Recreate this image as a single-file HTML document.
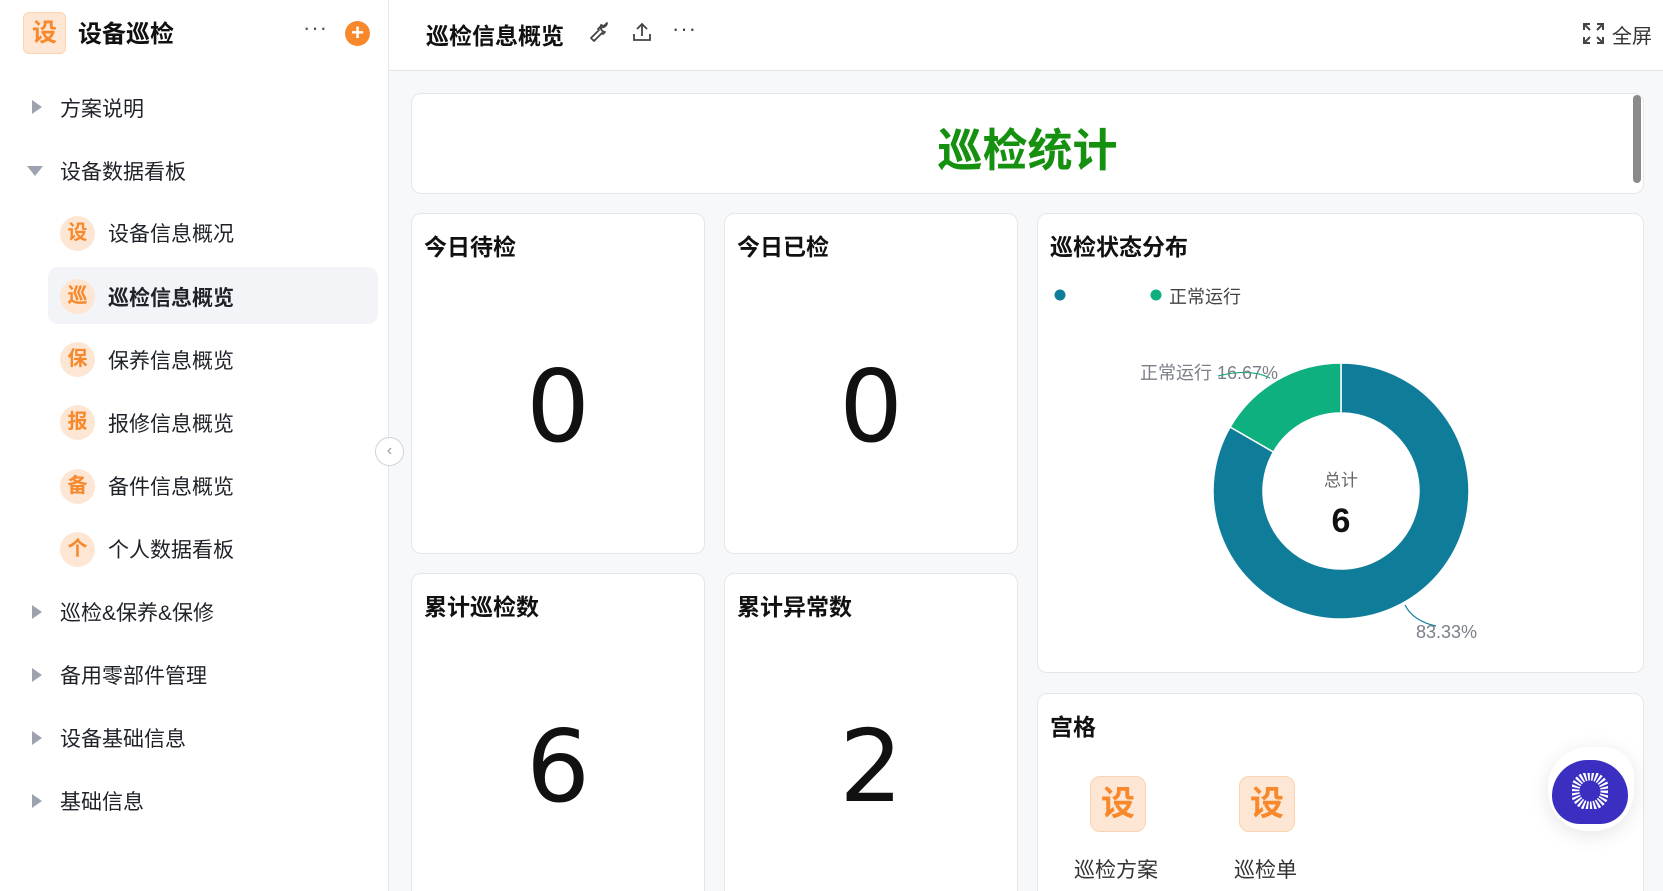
<!DOCTYPE html>
<html><head><meta charset="utf-8"><style>
*{margin:0;padding:0;box-sizing:border-box}
html{width:1663px;height:891px;overflow:hidden}
body{width:1663px;height:891px;overflow:hidden;background:#f7f8fa;font-family:"Liberation Sans","Noto Sans CJK SC",sans-serif;color:#1f2329;position:relative}
.abs{position:absolute}
.side{left:0;top:0;width:389px;height:891px;background:#fff;border-right:1px solid #e5e6eb}
.hdr{left:389px;top:0;width:1274px;height:71px;background:#fff;border-bottom:1px solid #e5e6eb}
.card{background:#fff;border:1px solid #e5e6eb;border-radius:10px;position:absolute}
.item{position:absolute;left:0;width:389px;font-size:21px;color:#1f2329;line-height:30px}
.tri{position:absolute;left:32px;width:0;height:0}
.ic{position:absolute;left:60px;width:35px;height:35px;border-radius:50%;background:#fde6d3;color:#f7892c;font-weight:bold;font-size:20px;text-align:center;line-height:35px}
.ct{position:absolute;left:12px;top:14px;font-size:23px;font-weight:bold;color:#111}
.num{position:absolute;left:0;width:100%;text-align:center;font-family:"DejaVu Sans",sans-serif;font-size:100px;color:#111;line-height:1}
</style></head><body>
<div class="abs side">
  <div class="abs" style="left:23px;top:12px;width:43px;height:42px;background:#fde6d3;border:1px solid #fbd3b0;border-radius:6px;color:#f7892c;font-weight:bold;font-size:25px;text-align:center;line-height:40px">设</div>
  <div class="abs" style="left:78px;top:14px;font-size:24px;font-weight:bold;color:#111">设备巡检</div>
  <div class="abs" style="left:303px;top:15px;font-size:22px;color:#555;letter-spacing:1px">···</div>
  <div class="abs" style="left:345px;top:21px;width:25px;height:25px;border-radius:50%;background:#f7892c;color:#fff;font-size:22px;line-height:24px;text-align:center;font-weight:bold">+</div>

  <div class="tri" style="top:100px;border-left:10px solid #9ca3af;border-top:7px solid transparent;border-bottom:7px solid transparent"></div>
  <div class="item" style="top:95px;left:60px">方案说明</div>
  <div class="tri" style="left:27px;top:166px;border-top:10px solid #9ca3af;border-left:8px solid transparent;border-right:8px solid transparent"></div>
  <div class="item" style="top:158px;left:60px">设备数据看板</div>

  <div class="abs" style="left:48px;top:267px;width:330px;height:57px;background:#f3f4f7;border-radius:10px"></div>
  <div class="ic" style="top:216px">设</div><div class="item" style="top:220px;left:108px">设备信息概况</div>
  <div class="ic" style="top:279px">巡</div><div class="item" style="top:284px;left:108px;font-weight:bold">巡检信息概览</div>
  <div class="ic" style="top:342px">保</div><div class="item" style="top:347px;left:108px">保养信息概览</div>
  <div class="ic" style="top:405px">报</div><div class="item" style="top:410px;left:108px">报修信息概览</div>
  <div class="ic" style="top:469px">备</div><div class="item" style="top:473px;left:108px">备件信息概览</div>
  <div class="ic" style="top:532px">个</div><div class="item" style="top:536px;left:108px">个人数据看板</div>

  <div class="tri" style="top:605px;border-left:10px solid #9ca3af;border-top:7px solid transparent;border-bottom:7px solid transparent"></div>
  <div class="item" style="top:599px;left:60px">巡检&amp;保养&amp;保修</div>
  <div class="tri" style="top:668px;border-left:10px solid #9ca3af;border-top:7px solid transparent;border-bottom:7px solid transparent"></div>
  <div class="item" style="top:662px;left:60px">备用零部件管理</div>
  <div class="tri" style="top:731px;border-left:10px solid #9ca3af;border-top:7px solid transparent;border-bottom:7px solid transparent"></div>
  <div class="item" style="top:725px;left:60px">设备基础信息</div>
  <div class="tri" style="top:794px;border-left:10px solid #9ca3af;border-top:7px solid transparent;border-bottom:7px solid transparent"></div>
  <div class="item" style="top:788px;left:60px">基础信息</div>
</div>
<div class="abs" style="left:375px;top:437px;width:29px;height:29px;border-radius:50%;background:#fff;border:1px solid #d0d3d9;color:#999;text-align:center;line-height:26px;font-size:16px">‹</div>

<div class="abs hdr">
  <div class="abs" style="left:37px;top:17px;font-size:23px;font-weight:bold;color:#111">巡检信息概览</div>
  <svg class="abs" style="left:198px;top:21px" width="24" height="24" viewBox="0 0 24 24" fill="none" stroke="#444" stroke-width="1.8"><path d="M14 4a5 5 0 0 0 4 7l-2 2-1-1-8 8-3-3 8-8-1-1 2-2a5 5 0 0 0 7-4l-3 3-3-1z" stroke-linejoin="round"/></svg>
  <svg class="abs" style="left:241px;top:20px" width="24" height="24" viewBox="0 0 24 24" fill="none" stroke="#444" stroke-width="1.8"><path d="M12 16V4M7 9l5-5 5 5M4 14v6h16v-6"/></svg>
  <div class="abs" style="left:283px;top:18px;font-size:22px;color:#444;letter-spacing:1px;line-height:22px">···</div>
  <svg class="abs" style="left:1194px;top:23px" width="21" height="21" viewBox="0 0 21 21" fill="none" stroke="#444" stroke-width="2"><path d="M1 7V1h6M1 1l6 6M14 1h6v6M20 1l-6 6M1 14v6h6M1 20l6-6M20 14v6h-6M20 20l-6-6"/></svg>
  <div class="abs" style="left:1223px;top:20px;font-size:20px;color:#333">全屏</div>
</div>

<div class="card" style="left:411px;top:93px;width:1233px;height:101px">
  <div class="abs" style="left:0;width:100%;top:20px;text-align:center;font-size:45px;font-weight:bold;color:#16900f">巡检统计</div>
</div>
<div class="abs" style="left:1633px;top:95px;width:8px;height:88px;border-radius:4px;background:#8a8a8a"></div>

<div class="card" style="left:411px;top:213px;width:294px;height:341px"><div class="ct">今日待检</div><div class="num" style="top:143px">0</div></div>
<div class="card" style="left:724px;top:213px;width:294px;height:341px"><div class="ct">今日已检</div><div class="num" style="top:143px">0</div></div>
<div class="card" style="left:411px;top:573px;width:294px;height:330px"><div class="ct">累计巡检数</div><div class="num" style="top:143px">6</div></div>
<div class="card" style="left:724px;top:573px;width:294px;height:330px"><div class="ct">累计异常数</div><div class="num" style="top:143px">2</div></div>

<div class="card" style="left:1037px;top:213px;width:607px;height:460px"><div class="ct">巡检状态分布</div></div>
<svg class="abs" style="left:0;top:0" width="1663" height="891">
  <circle cx="1060" cy="295" r="5.5" fill="#0f7d9a"/>
  <circle cx="1156" cy="295" r="5.5" fill="#0eb07f"/>
  <path d="M1341 363 A128 128 0 1 1 1230.15 427 L1273.45 452 A78 78 0 1 0 1341 413 Z" fill="#0f7d9a" stroke="#fff" stroke-width="1.5"/>
  <path d="M1230.15 427 A128 128 0 0 1 1341 363 L1341 413 A78 78 0 0 0 1273.45 452 Z" fill="#0eb07f" stroke="#fff" stroke-width="1.5"/>
  <path d="M1218 376 Q1250 368 1270 378" fill="none" stroke="#0eb07f" stroke-width="1.2"/>
  <path d="M1405 605 Q1413 621 1436 626" fill="none" stroke="#0f7d9a" stroke-width="1.2"/>
  <text x="1341" y="486" text-anchor="middle" font-size="17" fill="#666" font-family="Liberation Sans,Noto Sans CJK SC,sans-serif">总计</text>
  <text x="1341" y="532" text-anchor="middle" font-size="34" font-weight="bold" fill="#111" font-family="Liberation Sans,sans-serif">6</text>
  <text x="1140" y="379" font-size="18" fill="#7a7f88" font-family="Liberation Sans,Noto Sans CJK SC,sans-serif">正常运行 16.67%</text>
  <text x="1416" y="638" font-size="18" fill="#7a7f88" font-family="Liberation Sans,sans-serif">83.33%</text>
</svg>
<div class="abs" style="left:1169px;top:283px;font-size:18px;color:#444">正常运行</div>

<div class="card" style="left:1037px;top:693px;width:607px;height:210px">
  <div class="ct">宫格</div>
  <div class="abs" style="left:52px;top:82px;width:56px;height:56px;border-radius:10px;background:#fde6d3;border:1px solid #fbd3b0;color:#f7892c;font-weight:bold;font-size:34px;text-align:center;line-height:54px">设</div>
  <div class="abs" style="left:201px;top:82px;width:56px;height:56px;border-radius:10px;background:#fde6d3;border:1px solid #fbd3b0;color:#f7892c;font-weight:bold;font-size:34px;text-align:center;line-height:54px">设</div>
  <div class="abs" style="left:36px;top:160px;font-size:21px;color:#333">巡检方案</div>
  <div class="abs" style="left:196px;top:160px;font-size:21px;color:#333">巡检单</div>
</div>

<div class="abs" style="left:1548px;top:747px;width:86px;height:84px;border-radius:40px 30px 40px 40px;background:#fff;box-shadow:0 4px 20px rgba(0,0,0,.1)"></div>
<div class="abs" style="left:1552px;top:760px;width:76px;height:64px;border-radius:38px 38px 30px 30px;background:#3a2fc0"></div>
<svg class="abs" style="left:1572px;top:773px" width="36" height="36" viewBox="0 0 36 36">
  <g fill="#fff">
    <circle cx="18" cy="18" r="15" fill="none" stroke="#fff" stroke-width="9" stroke-dasharray="2 1.6"/>
  </g>
  <rect x="13" y="13" width="10" height="10" fill="#3a2fc0"/>
</svg>
</body></html>
